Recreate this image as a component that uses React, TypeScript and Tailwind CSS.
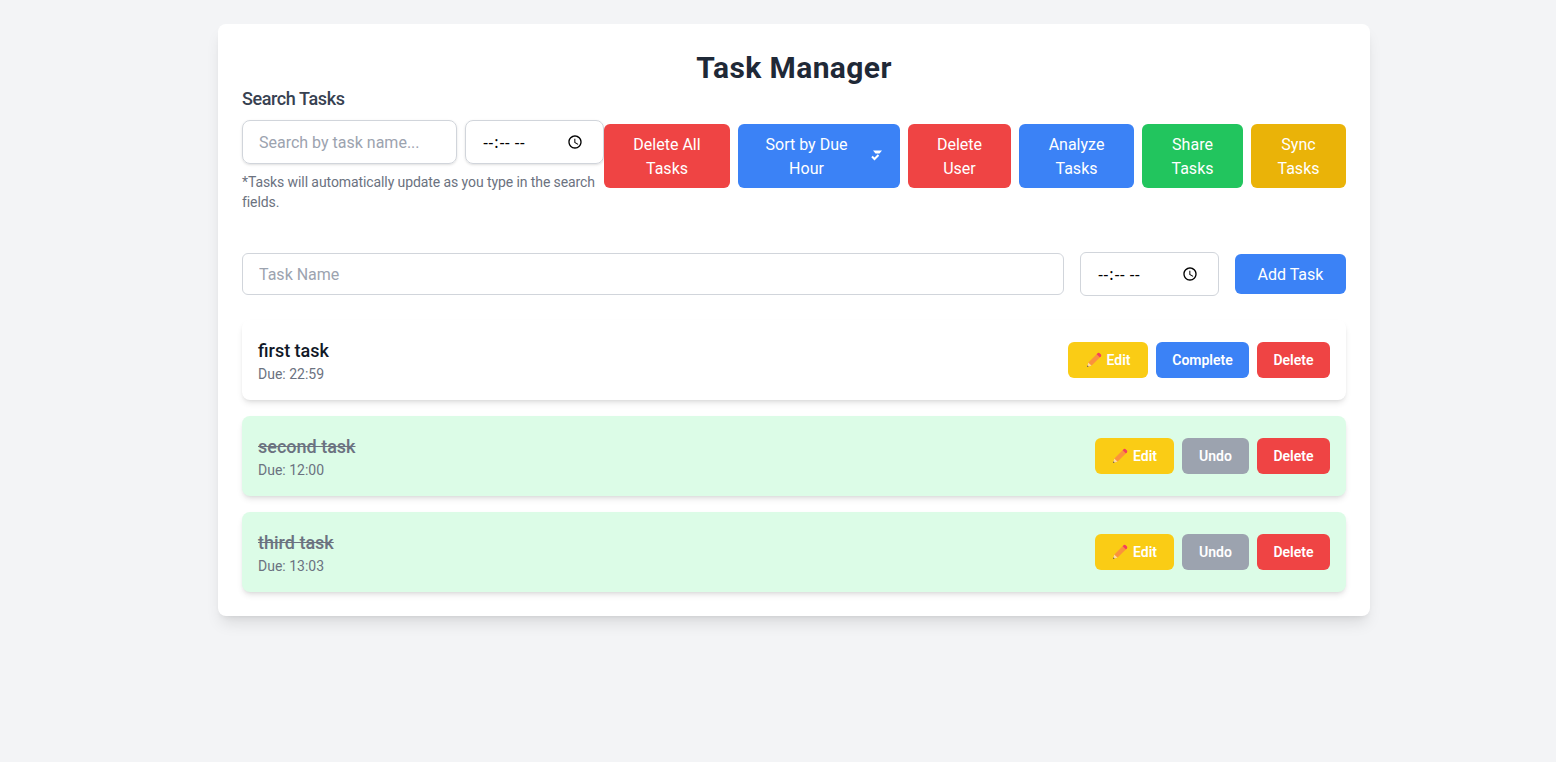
const font = "font-['Roboto','Noto_Sans',sans-serif]"

function PencilIcon() {
  return (
    <svg viewBox="0 0 16 16" className="h-4 w-4 shrink-0">
      <path d="M1 15 L2.4 10.4 L5.6 13.6 Z" fill="#fcd9a8" />
      <path d="M1 15 L1.5 13.3 L2.7 14.5 Z" fill="#5b4636" />
      <path d="M2.4 10.4 L10.6 2.2 L13.8 5.4 L5.6 13.6 Z" fill="#fb923c" />
      <path d="M10.6 2.2 L11.8 1 Q12.6 .4 13.4 1 L15 2.6 Q15.6 3.4 15 4.2 L13.8 5.4 Z" fill="#f43f5e" />
    </svg>
  )
}

function SortIcon() {
  return (
    <svg viewBox="0 0 12 12" className="h-3 w-3 shrink-0" fill="white">
      <path d="M3 0.5 H12 L9.5 3.5 H5.5 Z" />
      <path d="M2 6.5 L4.5 9 L8.5 5" fill="none" stroke="white" strokeWidth="2" />
    </svg>
  )
}

function TaskRow({ name, due, done, editWidth }: { name: string; due: string; done: boolean; editWidth: string }) {
  return (
    <div className={`flex items-center justify-between rounded-lg p-4 shadow-md ${done ? "bg-[#dcfce7]" : "bg-white"}`}>
      <div>
        <div className={`h-7 text-lg leading-[30px] font-medium ${done ? "text-[#6b7280] line-through" : "text-[#111827]"}`}>{name}</div>
        <div className="text-sm leading-5 text-[#6b7280]">Due: {due}</div>
      </div>
      <div className="flex gap-2">
        <button className={`flex h-9 items-center justify-center gap-[5px] rounded-md bg-[#facc15] text-sm font-semibold text-white ${editWidth}`}>
          <PencilIcon />
          Edit
        </button>
        {done ? (
          <button className="h-9 w-[67px] rounded-md bg-[#9ca3af] text-sm font-semibold text-white">Undo</button>
        ) : (
          <button className="h-9 w-[93px] rounded-md bg-[#3b82f6] text-sm font-semibold text-white">Complete</button>
        )}
        <button className="h-9 w-[73px] rounded-md bg-[#ef4444] text-sm font-semibold text-white">Delete</button>
      </div>
    </div>
  )
}

export default function App() {
  return (
    <main className={`min-h-screen bg-[#f3f4f6] pt-6 ${font}`}>
      <div className="ml-[218px] w-[1152px] rounded-lg bg-white p-6 shadow-lg">
        <h1 className="h-9 text-center text-3xl leading-10 font-bold tracking-[0.4px] text-[#1f2937]">Task Manager</h1>
        <div className="flex items-start">
          <div className="w-[362px]">
            <div className="h-7 text-lg leading-[30px] font-medium tracking-[-0.4px] text-[#374151]">Search Tasks</div>
            <div className="mt-2 flex gap-2">
              <input placeholder="Search by task name..." className="h-11 w-[215px] rounded-lg border border-[#d1d5db] px-4 shadow-sm placeholder:text-[#9ca3af]" />
              <input type="time" className="h-11 w-[139px] rounded-lg border border-[#d1d5db] px-4 font-['Noto_Sans'] tracking-[2px] shadow-sm" />
            </div>
            <p className="mt-2 text-sm leading-5 tracking-[-0.09px] text-[#6b7280]">*Tasks will automatically update as you type in the search fields.</p>
          </div>
          <div className="mt-10 flex flex-1 gap-2 text-white">
            <button className="h-16 w-[126px] rounded-md bg-[#ef4444] px-6 pt-0.5">Delete All Tasks</button>
            <button className="flex h-16 w-[162px] items-center justify-between rounded-md bg-[#3b82f6] pr-[18px] pl-6">
              <span className="w-[89px] pt-0.5">Sort by Due Hour</span>
              <SortIcon />
            </button>
            <button className="h-16 w-[103px] rounded-md bg-[#ef4444] px-6 pt-0.5">Delete User</button>
            <button className="h-16 w-[115px] rounded-md bg-[#3b82f6] px-6 pt-0.5">Analyze Tasks</button>
            <button className="h-16 w-[101px] rounded-md bg-[#22c55e] px-6 pt-0.5">Share Tasks</button>
            <button className="h-16 w-[95px] rounded-md bg-[#eab308] px-6 pt-0.5">Sync Tasks</button>
          </div>
        </div>
        <div className="mt-10 flex items-center gap-4">
          <input placeholder="Task Name" className="h-[42px] flex-1 rounded-md border border-[#d1d5db] px-4 placeholder:text-[#9ca3af]" />
          <input type="time" className="h-11 w-[139px] rounded-md border border-[#d1d5db] px-4 font-['Noto_Sans'] tracking-[2px]" />
          <button className="h-10 w-[111px] rounded-md bg-[#3b82f6] pt-0.5 text-white">Add Task</button>
        </div>
        <div className="mt-6 flex flex-col gap-4">
          <TaskRow name="first task" due="22:59" done={false} editWidth="w-[80px]" />
          <TaskRow name="second task" due="12:00" done={true} editWidth="w-[79px]" />
          <TaskRow name="third task" due="13:03" done={true} editWidth="w-[79px]" />
        </div>
      </div>
    </main>
  )
}
